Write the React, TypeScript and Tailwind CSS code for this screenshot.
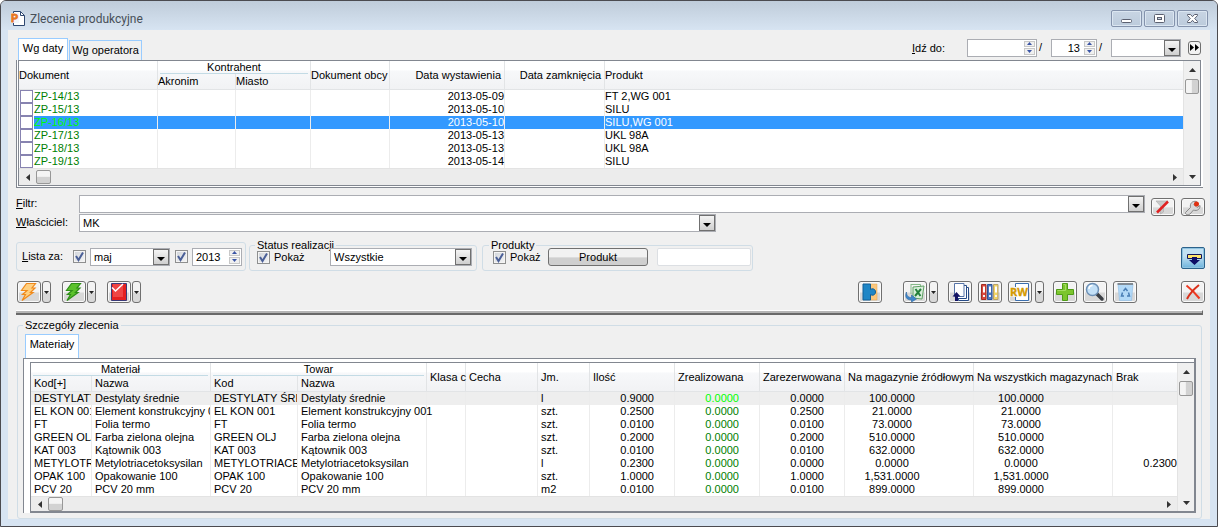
import { useState } from 'react';
import type { ReactNode } from 'react';
import clsx from 'clsx';

const orders = [
  { doc: 'ZP-14/13', issued: '2013-05-09', product: 'FT 2,WG 001' },
  { doc: 'ZP-15/13', issued: '2013-05-10', product: 'SILU' },
  { doc: 'ZP-16/13', issued: '2013-05-10', product: 'SILU,WG 001' },
  { doc: 'ZP-17/13', issued: '2013-05-13', product: 'UKL 98A' },
  { doc: 'ZP-18/13', issued: '2013-05-13', product: 'UKL 98A' },
  { doc: 'ZP-19/13', issued: '2013-05-14', product: 'SILU' },
];

const materials = [
  { code: 'DESTYLATY ŚRE', name: 'Destylaty średnie', unit: 'l', qty: '0.9000', reserved: '0.0000', stock: '100.0000', missing: '' },
  { code: 'EL KON 001', name: 'Element konstrukcyjny 001', unit: 'szt.', qty: '0.2500', reserved: '0.2500', stock: '21.0000', missing: '' },
  { code: 'FT', name: 'Folia termo', unit: 'szt.', qty: '0.0100', reserved: '0.0100', stock: '73.0000', missing: '' },
  { code: 'GREEN OLJ', name: 'Farba zielona olejna', unit: 'szt.', qty: '0.2000', reserved: '0.2000', stock: '510.0000', missing: '' },
  { code: 'KAT 003', name: 'Kątownik 003', unit: 'szt.', qty: '0.0100', reserved: '0.0100', stock: '632.0000', missing: '' },
  { code: 'METYLOTRIACE', name: 'Metylotriacetoksysilan', unit: 'l', qty: '0.2300', reserved: '0.0000', stock: '0.0000', missing: '0.2300' },
  { code: 'OPAK 100', name: 'Opakowanie 100', unit: 'szt.', qty: '1.0000', reserved: '1.0000', stock: '1,531.0000', missing: '' },
  { code: 'PCV 20', name: 'PCV 20 mm', unit: 'm2', qty: '0.0100', reserved: '0.0100', stock: '899.0000', missing: '' },
];

const th = 'p-0 text-left font-normal whitespace-nowrap border-r border-[#e2e4e6]';
const td = 'p-0 whitespace-nowrap border-r border-[#ececec]';
const headBg = 'bg-linear-to-b from-white from-30% via-[#f7f8fa] via-35% to-[#f1f2f4]';
const field = 'border border-[#abadb3] bg-white';

/* ---------- small controls ---------- */

const DropArrow = () => (
  <span className="pointer-events-none flex w-4 shrink-0 items-center justify-center border border-[#707070] bg-linear-to-b from-[#f4f4f4] to-[#cfcfcf]">
    <svg width="8" height="4" viewBox="0 0 8 4" className="mt-1"><path d="M0 0h8L4 4z" fill="#000" /></svg>
  </span>
);

const Combo = ({ id, label, value, className }: { id?: string; label?: string; value: string; className?: string }) => (
  <span className={clsx('flex h-[18px]', field, className)}>
    <select id={id} aria-label={label} defaultValue={value} className="min-w-0 flex-1 appearance-none px-[3px] leading-4 outline-none">
      <option>{value}</option>
    </select>
    <DropArrow />
  </span>
);

const Spin = ({ label, value, className, right }: { label: string; value: string; className?: string; right?: boolean }) => (
  <span className={clsx('flex h-[18px]', field, className)}>
    <input aria-label={label} defaultValue={value} className={clsx('min-w-0 flex-1 px-[3px] leading-4 outline-none', right && 'text-right')} />
    <span className="m-px flex w-[11px] shrink-0 flex-col gap-px">
      <button type="button" aria-label={label + ' +'} className="flex flex-1 items-center justify-center border border-[#c8c8c8] bg-[#f0f0f0]">
        <svg width="5" height="3" viewBox="0 0 5 3"><path d="M0 3h5L2.5 0z" fill="#3b55a5" /></svg>
      </button>
      <button type="button" aria-label={label + ' -'} className="flex flex-1 items-center justify-center border border-[#c8c8c8] bg-[#f0f0f0]">
        <svg width="5" height="3" viewBox="0 0 5 3"><path d="M0 0h5L2.5 3z" fill="#3b55a5" /></svg>
      </button>
    </span>
  </span>
);

const Check = ({ id, label }: { id?: string; label?: string }) => {
  const [on, setOn] = useState(true);
  return (
    <span className="relative flex size-[13px] shrink-0">
      <input id={id} type="checkbox" aria-label={label} checked={on} onChange={() => setOn(!on)}
        className="size-[13px] appearance-none border border-[#8e8f8f] bg-linear-to-br from-[#cfd3d9] to-[#f6f6f6] shadow-[inset_0_0_0_1px_#f4f4f4]" />
      {on && (
        <svg className="pointer-events-none absolute inset-0" width="13" height="13" viewBox="0 0 13 13">
          <path d="M3 6l2.5 4L10 2.5" fill="none" stroke="#4a5f97" strokeWidth="2" />
        </svg>
      )}
    </span>
  );
};

const ToolButton = ({ label, children, short }: { label: string; children: ReactNode; short?: boolean }) => (
  <button type="button" title={label} aria-label={label}
    className={clsx('w-6 shrink-0 rounded-[3px] border border-[#707070] bg-linear-to-b from-[#f3f3f3] from-50% to-[#d8d8d8] to-55% shadow-[inset_0_0_0_1px_#fafafa]', short ? 'h-[18px]' : 'h-[22px]')}>
    <svg className="block size-full" viewBox={short ? '1 1 22 16' : '1 1 22 20'}>{children}</svg>
  </button>
);

const SplitArrow = ({ label }: { label: string }) => (
  <button type="button" aria-label={label} className="flex h-[22px] w-[9px] shrink-0 items-center justify-center rounded-[3px] border border-[#707070] bg-linear-to-b from-[#f3f3f3] from-50% to-[#d8d8d8] to-55%">
    <svg width="5" height="3" viewBox="0 0 5 3"><path d="M0 0h5L2.5 3z" fill="#222" /></svg>
  </button>
);

const HScroll = ({ className }: { className: string }) => (
  <div className={clsx('flex items-stretch justify-between border-t border-[#e3e3e3] bg-[#ececec]', className)}>
    <div className="flex items-center">
      <button type="button" aria-label="W lewo" className="flex w-[17px] justify-center">
        <svg width="4" height="7" viewBox="0 0 4 7"><path d="M4 0v7L0 3.5z" fill="#333" /></svg>
      </button>
      <span className="h-[14px] w-[15px] rounded-xs border border-[#979797] bg-linear-to-b from-[#f4f4f4] from-45% to-[#d2d2d2] to-50%" />
    </div>
    <button type="button" aria-label="W prawo" className="flex w-[17px] items-center justify-center">
      <svg width="4" height="7" viewBox="0 0 4 7"><path d="M0 0v7L4 3.5z" fill="#333" /></svg>
    </button>
  </div>
);

const VScroll = () => (
  <div className="flex w-[17px] shrink-0 flex-col items-center justify-between border-l border-[#e3e3e3] bg-[#f0f0f0]">
    <div className="flex flex-col items-center">
      <button type="button" aria-label="W górę" className="flex h-[18px] items-center">
        <svg width="7" height="4" viewBox="0 0 7 4"><path d="M0 4h7L3.5 0z" fill="#333" /></svg>
      </button>
      <span className="h-[15px] w-[14px] rounded-xs border border-[#979797] bg-linear-to-r from-[#f4f4f4] from-45% to-[#d2d2d2] to-50%" />
    </div>
    <button type="button" aria-label="W dół" className="flex h-[17px] items-center">
      <svg width="7" height="4" viewBox="0 0 7 4"><path d="M0 0h7L3.5 4z" fill="#333" /></svg>
    </button>
  </div>
);

const CaptionButton = ({ label, children }: { label: string; children: ReactNode }) => (
  <button type="button" aria-label={label} className="flex h-[17px] w-[31px] items-center justify-center rounded-xs border border-[#8493ac] bg-linear-to-b from-[#c8d5e3] to-[#bccbdc] shadow-[inset_0_0_0_1px_#dbe6f1]">
    <svg width="13" height="11" viewBox="0 0 13 11" fill="#fff" stroke="#5b6070">{children}</svg>
  </button>
);

const Bolt = ({ fill, stroke }: { fill: string; stroke: string }) => (
  <path d="M9.5 2.5h9L15 7h3l-4.500 4.500H16L5 19.500l3.500-6H5.500L10 9.500H4.500z" fill={fill} stroke={stroke} strokeWidth="1.2" />
);

/* ---------- window parts ---------- */

const TitleBar = () => (
  <header className="flex h-[29px] justify-between bg-linear-to-b from-[#bfccda] to-[#d7e4f2] pr-[9px] pl-[10px]">
    <h1 className="flex items-center gap-[5px] pt-1.5 text-xs leading-4 font-normal text-[#474f58] [font-family:Roboto,'Noto_Sans',sans-serif]">
      <svg width="14" height="15" viewBox="0 0 14 15">
        <path d="M2.500.5h7l4 4v10h-11z" fill="#fff" stroke="#2f4870" />
        <path d="M9.500.5v4h4" fill="none" stroke="#2f4870" />
        <path d="M0 2h8v10H0z" fill="#f3f6fa" />
        <text x="0" y="11" fontSize="11" fontWeight="700" fill="#e87722" stroke="#e87722" strokeWidth=".8">P</text>
      </svg>
      Zlecenia produkcyjne
    </h1>
    <div className="flex gap-0.5 pt-[9px]">
      <CaptionButton label="Minimalizuj"><rect x="1.5" y="6.5" width="10" height="3" rx="1" /></CaptionButton>
      <CaptionButton label="Przywróć">
        <rect x="1.5" y="1.5" width="10" height="8" rx="1" />
        <rect x="4.5" y="4.5" width="4" height="2" fill="#c8d5e3" />
      </CaptionButton>
      <CaptionButton label="Zamknij">
        <path d="M1.5 1.500h3l2 2.200 2-2.200h3v1L8.700 5.500l2.800 3v1h-3l-2-2.200-2 2.200h-3v-1l2.800-3-2.800-3z" />
      </CaptionButton>
    </div>
  </header>
);

const OrdersTable = () => (
  <div className="mr-[7px] ml-2 border-b border-l border-[#828790] bg-white pr-0.5 pb-px pl-px">
    <div className="flex border border-[#828790]">
      <div className="min-w-0 flex-1">
        <table className="w-full table-fixed border-separate border-spacing-0">
          <colgroup>
            <col className="w-[139px]" /><col className="w-[78px]" /><col className="w-[75px]" /><col className="w-[79px]" />
            <col className="w-[115px]" /><col className="w-[100px]" /><col />
          </colgroup>
          <thead className={headBg}>
            <tr className="h-[13px]">
              <th rowSpan={2} className={clsx(th, 'border-b')}>Dokument</th>
              <th colSpan={2} className={th}>
                <div className="mx-0.5 border-b border-[#c3dbe5] text-center leading-3">Kontrahent</div>
              </th>
              <th rowSpan={2} className={clsx(th, 'border-b')}>Dokument obcy</th>
              <th rowSpan={2} className={clsx(th, 'border-b pr-[3px] text-right')}>Data wystawienia</th>
              <th rowSpan={2} className={clsx(th, 'border-b pr-[3px] text-right')}>Data zamknięcia</th>
              <th rowSpan={2} className={clsx(th, 'border-r-0 border-b')}>Produkt</th>
            </tr>
            <tr className="h-4">
              <th className={clsx(th, 'border-b')}>Akronim</th>
              <th className={clsx(th, 'border-b')}>Miasto</th>
            </tr>
          </thead>
          <tbody>
            {orders.map((o, i) => {
              const selected = i === 2;
              const cell = clsx(td, selected && 'bg-[#3399ff] text-white');
              return (
                <tr key={o.doc} className="h-[13px]">
                  <td className={td}>
                    <div className="flex pl-px">
                      <input type="checkbox" aria-label={o.doc} className="size-[13px] shrink-0 appearance-none border border-[#8783b0] bg-white" />
                      <span className={clsx('ml-px flex-1', selected ? 'bg-[#3399ff] text-[#00ff00]' : 'text-[#008000]')}>{o.doc}</span>
                    </div>
                  </td>
                  <td className={cell} />
                  <td className={cell} />
                  <td className={cell} />
                  <td className={clsx(cell, 'text-right')}>{o.issued}</td>
                  <td className={cell} />
                  <td className={clsx(cell, 'border-r-0')}>{o.product}</td>
                </tr>
              );
            })}
          </tbody>
        </table>
        <HScroll className="h-[17px]" />
      </div>
      <VScroll />
    </div>
  </div>
);

const MaterialsTable = () => (
  <table className="w-full table-fixed border-separate border-spacing-0">
    <colgroup>
      <col className="w-[61px]" /><col className="w-[119px]" /><col className="w-[87px]" /><col className="w-[129px]" />
      <col className="w-[39px]" /><col className="w-[72px]" /><col className="w-[52px]" /><col className="w-[85px]" />
      <col className="w-[85px]" /><col className="w-[85px]" /><col className="w-[129px]" /><col className="w-[139px]" /><col />
    </colgroup>
    <thead className={headBg}>
      <tr className="h-[13px]">
        {['Materiał', 'Towar'].map((g) => (
          <th key={g} colSpan={2} className={th}>
            <div className="mx-0.5 border-b border-[#c3dbe5] text-center leading-3">{g}</div>
          </th>
        ))}
        {['Klasa c', 'Cecha', 'Jm.', 'Ilość', 'Zrealizowana', 'Zarezerwowana', 'Na magazynie źródłowym', 'Na wszystkich magazynach', 'Brak'].map((h) => (
          <th key={h} rowSpan={2} className={clsx(th, 'border-b pl-[3px] last:border-r-0')}>{h}</th>
        ))}
      </tr>
      <tr className="h-4">
        {['Kod[+]', 'Nazwa', 'Kod', 'Nazwa'].map((h, i) => (
          <th key={i} className={clsx(th, 'border-b pl-[3px]')}>{h}</th>
        ))}
      </tr>
    </thead>
    <tbody>
      {materials.map((m, i) => (
        <tr key={m.code} className={clsx('h-[13px]', i === 0 && 'bg-[#eeeeee]')}>
          <td className={clsx(td, 'overflow-hidden pl-[3px]')}>{m.code}</td>
          <td className={clsx(td, 'overflow-hidden pl-[3px]')}>{m.name}</td>
          <td className={clsx(td, 'overflow-hidden pl-[3px]')}>{m.code}</td>
          <td className={clsx(td, 'pl-[3px]')}>{m.name}</td>
          <td className={td} />
          <td className={td} />
          <td className={clsx(td, 'pl-[3px]')}>{m.unit}</td>
          <td className={clsx(td, 'pr-5 text-right')}>{m.qty}</td>
          <td className={clsx(td, 'pr-5 text-right', i === 0 ? 'text-[#00ff00]' : 'text-[#008000]')}>0.0000</td>
          <td className={clsx(td, 'pr-5 text-right')}>{m.reserved}</td>
          <td className={clsx(td, 'pr-[34px] text-center')}>{m.stock}</td>
          <td className={clsx(td, 'pr-11 text-center')}>{m.stock}</td>
          <td className={clsx(td, 'border-r-0 text-right')}>{m.missing}</td>
        </tr>
      ))}
    </tbody>
  </table>
);

const Filters = () => (
  <div className="flex gap-1.5 pt-[7px] pr-[5px] pl-2">
    <div className="flex min-w-0 flex-1 flex-col gap-px">
      <div className="flex">
        <label htmlFor="filtr" className="w-[63px] shrink-0 leading-4"><u>F</u>iltr:</label>
        <span className={clsx('flex h-[18px] min-w-0 flex-1', field)}>
          <input id="filtr" className="min-w-0 flex-1 px-[3px] outline-none" />
          <DropArrow />
        </span>
      </div>
      <div className="flex">
        <label htmlFor="wlasciciel" className="w-[63px] shrink-0 leading-4"><u>W</u>łaściciel:</label>
        <Combo id="wlasciciel" value="MK" className="w-[637px]" />
      </div>
    </div>
    <div className="flex items-start gap-1.5 pt-[3px]">
      <ToolButton label="Wyczyść filtr" short>
        <path d="M5 3h12l-4.500 5v6l-3 2V8z" fill="#c9c9c9" stroke="#aaa" strokeWidth=".6" />
        <path d="M6 14.500L17 3.500" stroke="#e02020" strokeWidth="2.5" />
      </ToolButton>
      <ToolButton label="Konstruktor filtra" short>
        <path d="M4.500 14.500l5-5c-1-4 2-7 6-6l-2.500 3 3 3 3-2c.5 3.500-3 6-6.500 4.500l-3.500 4c-2 1.500-5 .5-4.500-1.500z" fill="#d8d8d8" stroke="#888" />
        <circle cx="15.5" cy="6" r="2.5" fill="#e03010" />
      </ToolButton>
    </div>
  </div>
);

const groupBox = 'min-w-0 rounded-[3px] border border-[#d0dde6]';

const ListOptions = () => (
  <div className="flex items-end pt-[10px] pr-[5px] pl-2">
    <fieldset className={clsx('flex h-[29px] w-[230px] items-center pl-[5px]', groupBox)}>
      <span className="w-[51px]"><u>L</u>ista za:</span>
      <Check label="Miesiąc włączony" />
      <Combo label="Miesiąc" value="maj" className="ml-1 w-20" />
      <span className="ml-[5px] flex"><Check label="Rok włączony" /></span>
      <Spin label="Rok" value="2013" className="ml-1 w-[50px]" />
    </fieldset>
    <fieldset className={clsx('ml-[3px] w-[228px] pb-1', groupBox)}>
      <legend className="ml-[5px] h-1.5 px-0.5 leading-1.5">Status realizacji</legend>
      <div className="flex items-center pl-[7px]">
        <Check id="pokaz-status" />
        <label htmlFor="pokaz-status" className="w-[60px] pl-1">Pokaż</label>
        <Combo label="Status realizacji" value="Wszystkie" className="w-[142px]" />
      </div>
    </fieldset>
    <fieldset className={clsx('ml-[5px] w-[271px] pb-1', groupBox)}>
      <legend className="ml-1.5 h-1.5 px-0.5 leading-1.5">Produkty</legend>
      <div className="flex items-center pl-[10px]">
        <Check id="pokaz-produkt" />
        <label htmlFor="pokaz-produkt" className="w-[42px] pl-1">Pokaż</label>
        <button type="button" className="h-[18px] w-[100px] rounded-[3px] border border-[#707070] bg-linear-to-b from-[#f2f2f2] from-50% to-[#cfcfcf] to-55%">Produkt</button>
        <input aria-label="Produkt" className="ml-[9px] h-[18px] w-[94px] rounded-xs border border-[#dcdfe3] bg-white" />
      </div>
    </fieldset>
    <button type="button" aria-label="Pokaż szczegóły" className="mb-0.5 ml-auto h-[22px] w-6 rounded-xs border border-[#2c628b] bg-linear-to-b from-[#c3e1f2] from-40% to-[#6cb3dc] shadow-[inset_0_0_0_1px_#8fc3e0]">
      <svg className="block size-full" viewBox="1 1 22 20">
        <path d="M6.500 7.500h14v4h-14z" fill="#ffe36b" stroke="#14145c" />
        <path d="M11 10h5v3h3l-5.500 5L8 13h3z" fill="#0d0d66" />
      </svg>
    </button>
  </div>
);

const Toolbar = () => (
  <div className="flex items-center pt-[10px] pr-[5px] pl-[9px]">
    <div className="flex gap-[11px]">
      <div className="flex gap-px">
        <ToolButton label="Generuj"><Bolt fill="#ffd080" stroke="#f08a1c" /></ToolButton>
        <SplitArrow label="Generuj – opcje" />
      </div>
      <div className="flex gap-px">
        <ToolButton label="Realizuj"><Bolt fill="#5cc22c" stroke="#2f8f18" /></ToolButton>
        <SplitArrow label="Realizuj – opcje" />
      </div>
      <div className="flex gap-px">
        <ToolButton label="Zatwierdź">
          <path d="M4.500 2.500h15v17h-15z" fill="#e52020" stroke="#3a3a78" />
          <path d="M6 3h10v13H6z" fill="#ef4545" />
          <path d="M5 6.500L8.500 10 16 3" fill="none" stroke="#fff" strokeWidth="1.5" />
        </ToolButton>
        <SplitArrow label="Zatwierdź – opcje" />
      </div>
    </div>
    <div className="ml-auto flex">
      <ToolButton label="Dodatki">
        <path d="M12 3h7v16h-7z" fill="#fbc77d" stroke="#e7a14b" strokeWidth=".5" />
        <path d="M5 3h7.500v5.500c2-1.500 5-.5 5 2.500s-3 4-5 2.500V19H5z" fill="#1f86c6" stroke="#125f96" />
      </ToolButton>
      <div className="ml-[21px] flex gap-0.5">
        <ToolButton label="Eksport do Excela">
          <path d="M7.500 3.500h10v3M8 4v9" fill="none" stroke="#86b988" />
          <path d="M10 6l11-1-2 13-9-1z" fill="#d9eedb" stroke="#5da163" />
          <path d="M12.500 8l5 7M18 8l-6 7" stroke="#23803a" strokeWidth="2" />
          <path d="M3.500 11c0 4 2 5.500 5 5.500v-2.500l5 4-5 3v-2c-5 0-7-3-5-8z" fill="#3f86c9" stroke="#2a64a3" strokeWidth=".6" />
        </ToolButton>
        <SplitArrow label="Eksport – opcje" />
      </div>
      <div className="ml-[10px] flex gap-1.5">
        <ToolButton label="Historia">
          <path d="M10.500 6.500h10v13h-10z" fill="#fff" stroke="#274b86" />
          <path d="M8.500 4.500h10v13h-10z" fill="#fff" stroke="#274b86" />
          <path d="M6.500 2.500h9.500v13H6.500z" fill="#fff" stroke="#5674a8" />
          <path d="M8.500 11l4 4.500h-2.500V20H7v-4.500H4.500z" fill="#141464" />
        </ToolButton>
        <ToolButton label="Segregatory">
          <path d="M3.500 3.500h4.500v15H3.500z" fill="#d9473c" stroke="#a32c22" />
          <path d="M9.500 3.500H14v15H9.500z" fill="#4b78c4" stroke="#2d5296" />
          <path d="M15.500 3.500H20v15h-4.500z" fill="#f2d566" stroke="#b8a06a" />
          <path d="M5 5.500h2v6H5zM11 5.500h2v6h-2zM17 5.500h2v6h-2z" fill="#fff" />
          <path d="M5 14h2v2H5zM11 14h2v2h-2zM17 14h2v2h-2z" fill="#f3f3f3" />
        </ToolButton>
        <div className="flex gap-[3px]">
          <ToolButton label="RW">
            <path d="M7.500 2.500h13v17h-13z" fill="#fff" stroke="#3c6fae" />
            <path d="M2 6h7v10H2z" fill="#f3f3f3" />
            <text x="2" y="15" fontSize="11" fontWeight="700" fill="#d49a00" stroke="#d49a00" strokeWidth=".3" fontFamily="Open Sans">RW</text>
          </ToolButton>
          <SplitArrow label="RW – opcje" />
        </div>
      </div>
      <div className="ml-[9px] flex gap-1.5">
        <ToolButton label="Dodaj">
          <path d="M9.500 2.500h5v6h6v5h-6v6h-5v-6h-6v-5h6z" fill="#7cc52e" stroke="#4f9c17" />
          <path d="M10.500 3.500h2v6h-8" fill="none" stroke="#a5dd63" />
        </ToolButton>
        <ToolButton label="Podgląd">
          <path d="M14 13l5 5" stroke="#3b3f45" strokeWidth="3.5" strokeLinecap="round" />
          <circle cx="9.5" cy="8.5" r="6" fill="#c3e0f7" stroke="#6c8fb5" strokeWidth="1.5" />
          <path d="M6 8c0-2 1.500-3.500 3.500-3.500" fill="none" stroke="#fff" strokeWidth="1.5" />
        </ToolButton>
        <ToolButton label="Usuń">
          <path d="M5 3h15l-1.500 16.500h-12z" fill="#b3d9f7" stroke="#8bbbe4" strokeWidth=".6" />
          <path d="M4.500 3h15.500" stroke="#808a94" strokeWidth="2" />
          <path d="M10.500 10L12.500 7.500l2 2.500M15.500 11.500l1 3.500H14M11 15H8.500l1-3.500" fill="none" stroke="#4a7eb5" strokeWidth="1.5" />
        </ToolButton>
      </div>
      <div className="ml-11 flex">
        <ToolButton label="Zamknij okno">
          <path d="M5.500 4.500C10 8 14 12 18.500 17.500" stroke="#ee3a22" strokeWidth="2" fill="none" />
          <path d="M18 4C13 8 9 12 6 18" stroke="#d9301a" strokeWidth="2" fill="none" />
        </ToolButton>
      </div>
    </div>
  </div>
);

const App = () => (
  <div className="flex min-h-screen flex-col overflow-hidden rounded-t-md border border-[#4b4b50] bg-[#d7e4f2] text-[11px] leading-[13px] text-black [font-family:'Liberation_Sans',Arial,sans-serif]">
    <TitleBar />
    <main className="mx-[7px] mb-[7px] flex-1 bg-[#f0f0f0]">
      <div className="flex h-[30px] justify-between pr-[9px] pl-[10px]">
        <div role="tablist" className="flex items-end gap-px">
          <button type="button" role="tab" aria-selected="true" className="h-[22px] w-[50px] border border-b-0 border-[#99ccff] bg-white pb-0.5 text-center">Wg daty</button>
          <button type="button" role="tab" aria-selected="false" className="h-5 w-[73px] border border-b-0 border-[#99ccff] bg-[#f0f0f0] text-center">Wg operatora</button>
        </div>
        <div className="flex items-center pt-[5px]">
          <span className="mr-[22px] leading-4"><u>I</u>dź do:</span>
          <Spin label="Numer" value="" className="w-[70px]" />
          <span className="w-3.5 pl-0.5">/</span>
          <Spin label="Rok dokumentu" value="13" right className="w-[46px]" />
          <span className="w-3.5 pl-0.5">/</span>
          <Combo label="Seria" value="" className="w-[70px]" />
          <button type="button" aria-label="Idź" className="ml-[7px] flex h-[14px] w-[13px] items-center justify-center rounded-[3px] border border-[#707070] bg-[#f2f2f2]">
            <svg width="11" height="7" viewBox="0 0 11 7"><path d="M1 0l4 3.500L1 7zM6 0l4 3.500L6 7z" fill="#000" /></svg>
          </button>
        </div>
      </div>
      <OrdersTable />
      <Filters />
      <ListOptions />
      <Toolbar />
      <div className="mt-[7px] mr-[7px] ml-2 h-[5px] border-t border-r border-b-2 border-t-white border-r-[#696969] border-b-[#696969] bg-[#b5b5b5]" />
      <fieldset className="mt-[7px] mr-2 ml-[9px] min-w-0 rounded-[3px] border border-[#d0dde6] pr-[5px] pb-[5px] pl-[5px]">
        <legend className="h-1.5 px-0.5 leading-1.5">Szczegóły zlecenia</legend>
        <div role="tablist" className="flex pt-1.5 pl-0.5">
          <button type="button" role="tab" aria-selected="true" className="h-6 w-[54px] border border-b-0 border-[#99ccff] bg-white pb-1 text-center">Materiały</button>
        </div>
        <div className="border border-r-2 border-b-0 border-[#828790] bg-white pt-[3px] pl-1.5">
          <div className="flex border border-r-0 border-b-2 border-[#828790]">
            <div className="min-w-0 flex-1">
              <MaterialsTable />
              <HScroll className="h-[15px]" />
            </div>
            <VScroll />
          </div>
        </div>
      </fieldset>
    </main>
  </div>
);

export default App;
